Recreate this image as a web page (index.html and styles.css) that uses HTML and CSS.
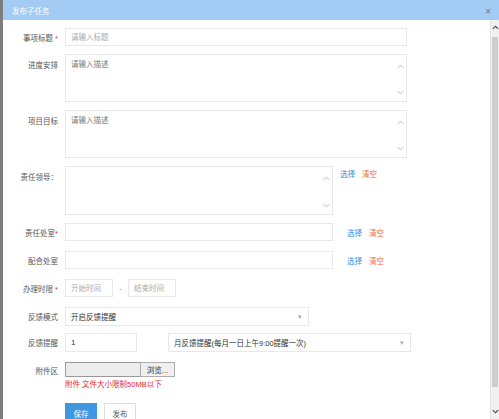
FILE: index.html
```html
<!DOCTYPE html>
<html lang="zh-CN">
<head>
    <meta charset="UTF-8">
    <title>发布子任务</title>
    <link rel="stylesheet" href="styles.css">
</head>
<body>
    <div class="dialog">
        <div class="dialog-header">
            <span class="dialog-title">发布子任务</span>
            <span class="close">×</span>
        </div>
        <div class="dialog-main">
            <div class="form">
                <div class="row">
                    <label class="label">事项标题 <i>*</i></label>
                    <input class="input w-full" placeholder="请输入标题">
                </div>
                <div class="row top">
                    <label class="label">进度安排</label>
                    <div class="area w-full">
                        <textarea placeholder="请输入描述"></textarea>
                        <div class="arrows">
                            <svg viewBox="0 0 8 5"><polyline points="1,4 4,1 7,4"/></svg>
                            <svg viewBox="0 0 8 5"><polyline points="1,1 4,4 7,1"/></svg>
                        </div>
                    </div>
                </div>
                <div class="row top">
                    <label class="label">项目目标</label>
                    <div class="area w-full">
                        <textarea placeholder="请输入描述"></textarea>
                        <div class="arrows">
                            <svg viewBox="0 0 8 5"><polyline points="1,4 4,1 7,4"/></svg>
                            <svg viewBox="0 0 8 5"><polyline points="1,1 4,4 7,1"/></svg>
                        </div>
                    </div>
                </div>
                <div class="row top">
                    <label class="label">责任领导：</label>
                    <div class="area tall w-mid">
                        <textarea></textarea>
                        <div class="arrows">
                            <svg viewBox="0 0 8 5"><polyline points="1,4 4,1 7,4"/></svg>
                            <svg viewBox="0 0 8 5"><polyline points="1,1 4,4 7,1"/></svg>
                        </div>
                    </div>
                    <div class="links near"><a class="pick">选择</a><a class="clear">清空</a></div>
                </div>
                <div class="row loose">
                    <label class="label">责任处室<i>*</i></label>
                    <input class="input w-mid">
                    <div class="links"><a class="pick">选择</a><a class="clear">清空</a></div>
                </div>
                <div class="row loose">
                    <label class="label">配合处室</label>
                    <input class="input w-mid">
                    <div class="links"><a class="pick">选择</a><a class="clear">清空</a></div>
                </div>
                <div class="row loose">
                    <label class="label">办理时限 <i>*</i></label>
                    <input class="input w-date" placeholder="开始时间">
                    <span class="dash">-</span>
                    <input class="input w-date" placeholder="结束时间">
                </div>
                <div class="row tight">
                    <label class="label">反馈模式</label>
                    <div class="select w-mode"><span>开启反馈提醒</span><b>▾</b></div>
                </div>
                <div class="row loose">
                    <label class="label">反馈提醒</label>
                    <input class="input w-num value" value="1">
                    <div class="select w-freq"><span>月反馈提醒(每月一日上午9:00提醒一次)</span><b>▾</b></div>
                </div>
                <div class="row top attach">
                    <label class="label">附件区</label>
                    <div class="file-box">
                        <div class="file">
                            <span class="file-name"></span>
                            <span class="file-btn">浏览...</span>
                        </div>
                        <div class="file-tip">附件 文件大小限制50MB以下</div>
                    </div>
                </div>
                <div class="actions">
                    <button class="btn primary">保存</button>
                    <button class="btn">发布</button>
                </div>
            </div>
            <div class="scrollbar">
                <svg class="sb-arrow" viewBox="0 0 8 5"><polyline points="1,4 4,1 7,4"/></svg>
                <div class="sb-track"><div class="sb-thumb"></div></div>
                <svg class="sb-arrow" viewBox="0 0 8 5"><polyline points="1,1 4,4 7,1"/></svg>
            </div>
        </div>
    </div>
</body>
</html>
```

FILE: styles.css
```css
* {
    box-sizing: border-box;
}

body {
    margin: 0;
    font-family: "Liberation Sans", "Noto Sans CJK SC", sans-serif;
    font-size: 7.5px;
    color: #555;
    background-color: #fff;
}

.dialog {
    display: flex;
    flex-direction: column;
    width: 499px;
    height: 419px;
    border-left: 3px solid #7d7d7d;
    overflow: hidden;
}

.dialog-header {
    height: 20px;
    flex-shrink: 0;
    display: flex;
    align-items: center;
    justify-content: space-between;
    padding: 0 8px 0 9px;
    background-color: #a4cbf4;
    color: #fff;
}

.close {
    color: #5a7898;
    font-size: 10px;
    margin-top: 3px;
}

.dialog-main {
    flex: 1;
    display: flex;
    min-height: 0;
}

.form {
    flex: 1;
    padding-top: 8px;
}

.row {
    display: flex;
    align-items: center;
    margin-bottom: 8px;
}

.row.loose {
    margin-bottom: 10px;
}

.row.tight {
    margin-bottom: 7px;
}

.row.top {
    align-items: flex-start;
}

.label {
    width: 57px;
    flex-shrink: 0;
    margin-right: 5px;
    padding-right: 2px;
    text-align: right;
    white-space: nowrap;
}

.row.top .label {
    padding-top: 5px;
}

.label i {
    font-style: normal;
    color: #e33;
}

.input,
.area,
.select {
    border: 1px solid #e8e8e8;
    background-color: #fff;
    font-family: inherit;
    font-size: 7.5px;
    color: #333;
}

.input {
    height: 18px;
    padding: 0 5px;
    outline: none;
}

.input::placeholder {
    color: #aaa;
}

textarea::placeholder {
    color: #777;
}

.input.value {
    height: 19px;
    font-size: 8px;
}

.w-full { width: 342px; }
.w-mid { width: 268px; }
.w-date { width: 48px; }
.w-mode { width: 244px; }
.w-num { width: 72px; }
.w-freq { width: 243px; margin-left: 31px; }

.area {
    display: flex;
    height: 48px;
}

.area.tall {
    height: 49px;
}

.area textarea {
    flex: 1;
    border: none;
    resize: none;
    outline: none;
    padding: 3px 5px;
    font-family: inherit;
    font-size: 7.5px;
    color: #333;
}

.arrows {
    width: 10px;
    display: flex;
    flex-direction: column;
    justify-content: space-between;
    align-items: center;
    padding: 9px 2px 6px 0;
}

.arrows svg {
    width: 7px;
    height: 5px;
    fill: none;
    stroke: #aaa;
    stroke-width: 1;
}

.links {
    display: flex;
    gap: 7px;
    margin-left: 14px;
}

.links.near {
    margin-left: 7px;
    padding-top: 2px;
}

.pick {
    color: #3a8ee0;
}

.clear {
    color: #ee6b3c;
}

.dash {
    width: 15px;
    text-align: center;
    color: #888;
}

.select {
    height: 19px;
    display: flex;
    align-items: center;
    justify-content: space-between;
    padding: 0 6px 0 5px;
}

.select b {
    font-weight: normal;
    color: #aaa;
    font-size: 7px;
}

.attach {
    margin-bottom: 14px;
}

.row.attach .label {
    padding-top: 3px;
}

.file {
    display: flex;
    height: 15px;
}

.file-name {
    width: 75px;
    background-color: #ececec;
    border: 1px solid #999;
    border-right: none;
}

.file-btn {
    width: 35px;
    display: flex;
    align-items: center;
    justify-content: center;
    background-color: #efefef;
    border: 1px solid #adadad;
    color: #333;
}

.file-tip {
    margin-top: 1px;
    color: #e6262d;
}

.actions {
    display: flex;
    gap: 7px;
    padding-left: 62px;
}

.btn {
    width: 32px;
    height: 20px;
    border: 1px solid #ddd;
    background-color: #fff;
    color: #555;
    font-family: inherit;
    font-size: 7.5px;
    padding: 0;
}

.btn.primary {
    background-color: #3e97e2;
    border-color: #3e97e2;
    color: #fff;
}

.scrollbar {
    width: 9px;
    flex-shrink: 0;
    display: flex;
    flex-direction: column;
    align-items: center;
    background-color: #f0f0f0;
    border-left: 1px solid #e4e4e4;
}

.sb-arrow {
    width: 7px;
    height: 5px;
    margin: 5px 0;
    fill: none;
    stroke: #444;
    stroke-width: 1.3;
}

.sb-track {
    flex: 1;
    width: 100%;
    padding: 2px 1px;
}

.sb-thumb {
    height: 350px;
    background-color: #cdcdcd;
}
```
